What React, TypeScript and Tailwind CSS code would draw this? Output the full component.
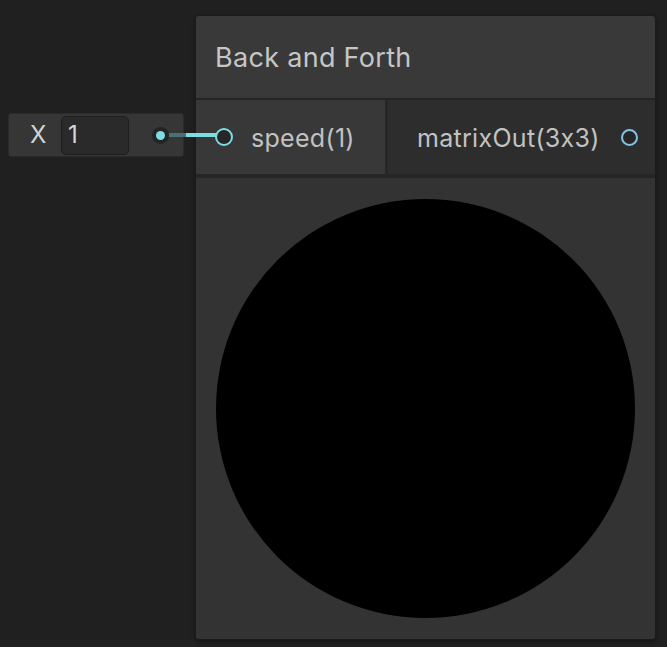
import React from "react";

export default function App() {
  return (
    <div
      className="relative w-[667px] h-[647px] bg-[#202020] overflow-hidden flex items-start [font-feature-settings:'calt'_0]"
      style={{ fontFamily: "Inter, 'Noto Sans', sans-serif" }}
    >
      {/* Left value field */}
      <div className="mt-[113px] ml-[8px] w-[176px] h-[44px] bg-[#363636] rounded-[3px] border border-[#2a2a2a] flex items-center pl-[21px] pr-[14px]">
        <span className="text-[24px] leading-none text-[#d2d2d2] w-[17px]">X</span>
        <div className="ml-[14px] w-[68px] h-[39px] rounded-[5px] bg-[#2a2a2a] border border-[#1d1d1d] flex items-center pl-[6px]">
          <span className="text-[24px] leading-none text-[#d6d6d6]">1</span>
        </div>
        <div className="ml-auto w-[17px] h-[17px] rounded-full bg-[#242424] flex items-center justify-center">
          <div className="w-[9px] h-[9px] rounded-full bg-[#7ddde4]" />
        </div>
      </div>

      {/* Node */}
      <div className="mt-[15px] ml-[11px] w-[461px] border border-[#1b1b1b] rounded-[4px] flex flex-col shadow-[0_2px_4px_rgba(0,0,0,0.35)]">
        <div className="h-[82px] bg-[#393939] rounded-t-[3px] flex items-center pl-[19px]">
          <span className="text-[27px] leading-none text-[#c6c6c6] tracking-[0.3px]">Back and Forth</span>
        </div>
        <div className="h-[2px] bg-[#242424]" />
        <div className="h-[74px] flex">
          <div className="w-[189px] bg-[#383838] flex items-center pl-[19px]">
            <div className="w-[18px] h-[18px] rounded-full border-[2.5px] border-[#7ddde4] bg-[#262626]" />
            <span className="ml-[18px] mt-[3px] text-[25px] leading-none text-[#c2c2c2] tracking-[0.3px]">speed(1)</span>
          </div>
          <div className="w-[3px] bg-[#262626]" />
          <div className="flex-1 bg-[#2d2d2d] flex items-center pl-[29px]">
            <span className="mt-[3px] text-[25px] leading-none text-[#c2c2c2] tracking-[0.3px]">matrixOut(3x3)</span>
            <div className="ml-[21px] w-[17px] h-[17px] rounded-full border-2 border-[#80c4e6] bg-[#262626]" />
          </div>
        </div>
        <div className="h-[4px] bg-[#262626]" />
        <div className="h-[461px] bg-[#333333] rounded-b-[3px] flex items-center justify-center">
          <div className="w-[419px] h-[419px] rounded-full bg-black" />
        </div>
      </div>

      {/* Wire */}
      <svg
        className="absolute left-0 top-0 pointer-events-none"
        width="667"
        height="647"
        viewBox="0 0 667 647"
      >
        <line x1="169" y1="135" x2="186" y2="135" stroke="#4c6f70" strokeWidth="4" />
        <line x1="186" y1="135" x2="216" y2="135" stroke="#7ddde4" strokeWidth="4" />
      </svg>
    </div>
  );
}
